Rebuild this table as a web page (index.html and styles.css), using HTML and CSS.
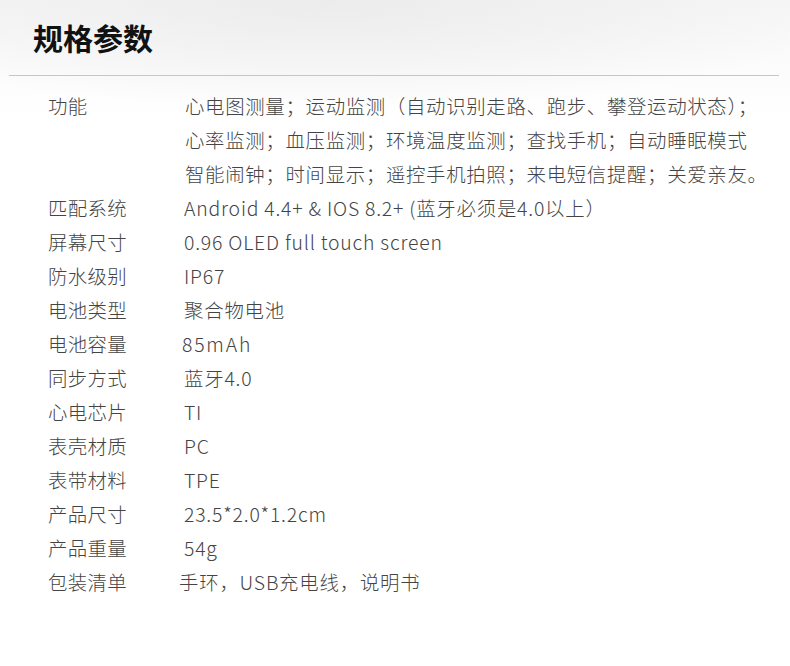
FILE: index.html
```html
<!DOCTYPE html>
<html lang="zh-CN">
<head>
  <meta charset="utf-8">
  <title>规格参数</title>
  <link rel="stylesheet" href="styles.css">
</head>
<body>
  <div class="spec-head">
    <h1>规格参数</h1>
  </div>
  <div class="spec-list">
    <div class="label">功能</div>
    <div class="value multi">
      心电图测量；运动监测（自动识别走路、跑步、攀登运动状态）；<br>
      心率监测；血压监测；环境温度监测；查找手机；自动睡眠模式<br>
      智能闹钟；时间显示；遥控手机拍照；来电短信提醒；关爱亲友。
    </div>

    <div class="label">匹配系统</div>
    <div class="value">Android 4.4+ &amp; IOS 8.2+ (蓝牙必须是4.0以上）</div>

    <div class="label">屏幕尺寸</div>
    <div class="value">0.96 OLED full touch screen</div>

    <div class="label">防水级别</div>
    <div class="value">IP67</div>

    <div class="label">电池类型</div>
    <div class="value">聚合物电池</div>

    <div class="label">电池容量</div>
    <div class="value spaced">85mAh</div>

    <div class="label">同步方式</div>
    <div class="value">蓝牙4.0</div>

    <div class="label">心电芯片</div>
    <div class="value">TI</div>

    <div class="label">表壳材质</div>
    <div class="value">PC</div>

    <div class="label">表带材料</div>
    <div class="value">TPE</div>

    <div class="label">产品尺寸</div>
    <div class="value">23.5*2.0*1.2cm</div>

    <div class="label">产品重量</div>
    <div class="value">54g</div>

    <div class="label">包装清单</div>
    <div class="value shift">手环，USB充电线，说明书</div>
  </div>
</body>
</html>
```

FILE: styles.css
```css
body {
    margin: 0;
    background:
        radial-gradient(ellipse 520px 110px at 330px 0, #ececec 0%, rgba(255, 255, 255, 0) 100%),
        linear-gradient(180deg, #f6f6f6 0, #fbfbfb 60px, #fff 120px);
    background-repeat: no-repeat;
    background-color: #fff;
    font-family: "Noto Sans CJK SC", "Noto Sans", sans-serif;
    color: #444;
    min-height: 666px;
}

.spec-head {
    height: 75px;
    margin: 0 11px 0 9px;
    border-bottom: 1px solid #c6c6c6;
}

.spec-head h1 {
    margin: 0;
    padding-left: 24px;
    font-size: 30px;
    line-height: 74px;
    font-weight: bold;
    color: #111;
}

.spec-list {
    display: grid;
    grid-template-columns: 136px 1fr;
    padding: 13px 0 0 48px;
    font-size: 19.4px;
    font-weight: 300;
    line-height: 34px;
    letter-spacing: 0.8px;
}

.label {
    white-space: nowrap;
    letter-spacing: 0.4px;
}

.value {
    white-space: nowrap;
}

.value.multi {
    padding-left: 1px;
    letter-spacing: 0.7px;
}

.value.spaced {
    margin-left: -2px;
    letter-spacing: 1.8px;
}

.value.shift {
    margin-left: -5px;
}
```
